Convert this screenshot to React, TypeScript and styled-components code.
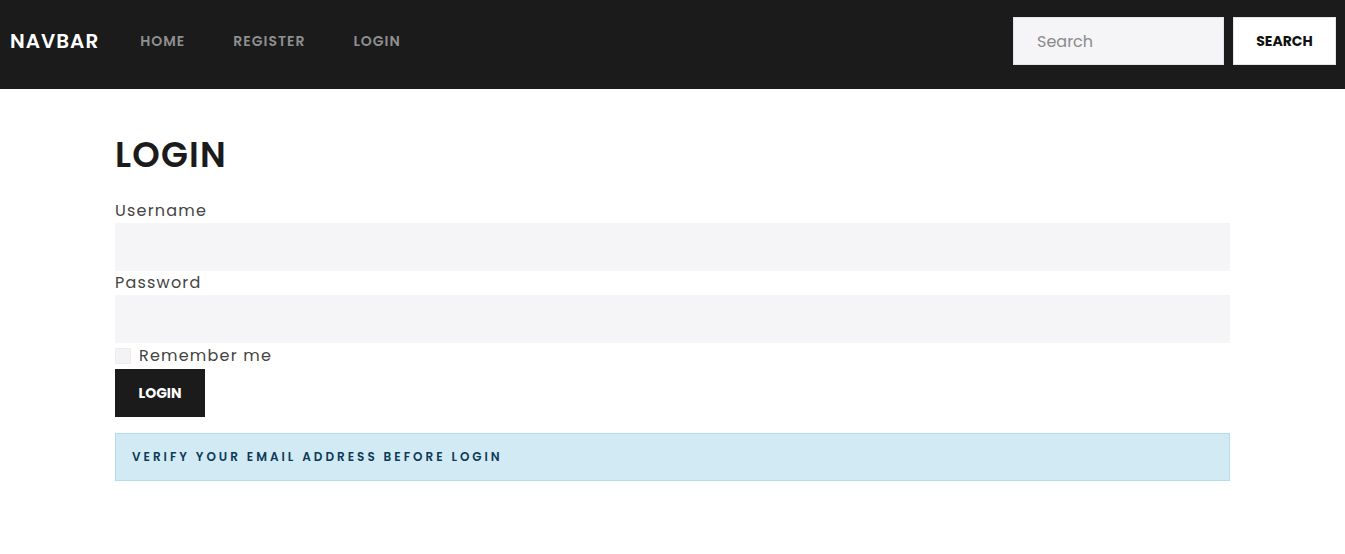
import React from "react";
import styled, { createGlobalStyle } from "styled-components";

const Global = createGlobalStyle`
  * { box-sizing: border-box; }
  body { margin: 0; font-family: "Poppins", "Open Sans", sans-serif; background: #fff; }
`;

const Nav = styled.nav`
  height: 89px;
  background: #1b1b1b;
  display: flex;
  align-items: center;
  padding: 0 9px 7px 10px;
`;

const Brand = styled.a`
  color: #fff;
  font-size: 20px;
  font-weight: 600;
  letter-spacing: 1px;
  margin-right: 41px;
  text-decoration: none;
`;

const NavLinks = styled.div`
  display: flex;
  gap: 48px;
  flex: 1;
`;

const NavLink = styled.a`
  color: #8f8f8f;
  font-size: 14px;
  font-weight: 600;
  letter-spacing: 1px;
  text-decoration: none;
`;

const SearchForm = styled.form`
  display: flex;
  gap: 9px;
`;

const SearchInput = styled.input`
  width: 211px;
  height: 48px;
  border: 1px solid #e4e4e6;
  background: #f5f5f7;
  padding: 0 23px;
  font-family: inherit;
  font-size: 16px;
  color: #333;
  outline: none;
  &::placeholder { color: #8a8a8a; }
`;

const SearchButton = styled.button`
  width: 103px;
  height: 48px;
  border: 1px solid #e4e4e6;
  background: #fff;
  color: #111;
  font-family: inherit;
  font-size: 14px;
  font-weight: 700;
`;

const Main = styled.main`
  max-width: 1115px;
  margin: 0 auto;
  padding-top: 40px;
`;

const Title = styled.h1`
  margin: 0 0 18px;
  font-size: 35px;
  line-height: 52px;
  font-weight: 600;
  letter-spacing: 1.2px;
  color: #1b1b1b;
`;

const Label = styled.label`
  display: block;
  font-size: 16px;
  line-height: 24px;
  letter-spacing: 1.2px;
  color: #444;
`;

const Field = styled.input`
  display: block;
  width: 100%;
  height: 48px;
  border: none;
  background: #f5f5f7;
  padding: 0 16px;
  font-family: inherit;
  outline: none;
`;

const CheckRow = styled.div`
  display: flex;
  align-items: center;
  gap: 8px;
  height: 26px;
`;

const Box = styled.span`
  width: 16px;
  height: 16px;
  background: #f3f3f5;
  border: 1px solid #ececee;
`;

const Primary = styled.button`
  width: 90px;
  height: 48px;
  border: none;
  background: #1b1b1b;
  color: #fff;
  font-family: inherit;
  font-size: 14px;
  font-weight: 700;
`;

const Alert = styled.div`
  margin-top: 16px;
  height: 48px;
  display: flex;
  align-items: center;
  padding: 0 16px;
  background: #d2eaf4;
  border: 1px solid #b4dcef;
  color: #0d3a56;
  font-size: 12px;
  font-weight: 600;
  letter-spacing: 3px;
`;

export default function App() {
  return (
    <>
      <Global />
      <Nav>
        <Brand href="#">NAVBAR</Brand>
        <NavLinks>
          <NavLink href="#">HOME</NavLink>
          <NavLink href="#">REGISTER</NavLink>
          <NavLink href="#">LOGIN</NavLink>
        </NavLinks>
        <SearchForm onSubmit={(e) => e.preventDefault()}>
          <SearchInput placeholder="Search" />
          <SearchButton>SEARCH</SearchButton>
        </SearchForm>
      </Nav>
      <Main>
        <Title>LOGIN</Title>
        <Label>Username</Label>
        <Field />
        <Label>Password</Label>
        <Field type="password" />
        <CheckRow>
          <Box />
          <Label as="span">Remember me</Label>
        </CheckRow>
        <Primary>LOGIN</Primary>
        <Alert>VERIFY YOUR EMAIL ADDRESS BEFORE LOGIN</Alert>
      </Main>
    </>
  );
}
